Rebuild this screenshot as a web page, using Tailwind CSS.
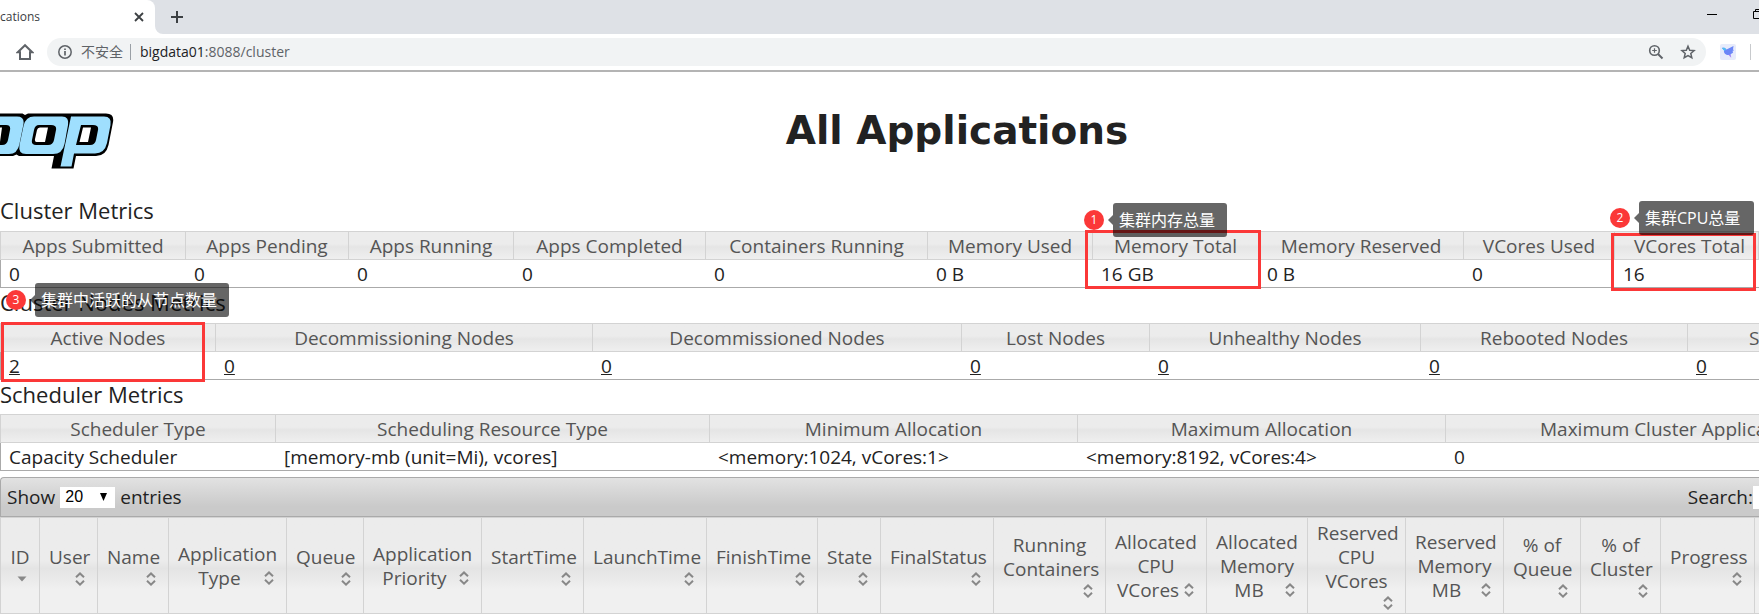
<!DOCTYPE html>
<html lang="en">
<head>
<meta charset="utf-8">
<title>All Applications</title>
<script src="https://cdn.jsdelivr.net/npm/@tailwindcss/browser@4"></script>
</head>
<body class="relative min-h-screen overflow-hidden bg-white font-['Open_Sans','Noto_Sans_CJK_SC',sans-serif] text-[19px] leading-6 text-[#222]">

<!-- shared symbols -->
<svg class="hidden">
  <symbol id="sort" viewBox="0 0 16 16"><path d="M4 6.2 8 2.4l4 3.8M4 9.8l4 3.8 4-3.8" fill="none" stroke="#888" stroke-width="2"/></symbol>
  <symbol id="desc" viewBox="0 0 16 16"><path d="M3.500 5.500h9L8 10.500z" fill="#888"/></symbol>
</svg>

<!-- tab strip -->
<div class="flex h-[34px] items-stretch bg-[#dee1e6]">
  <div class="flex w-[155px] flex-none items-center justify-between rounded-tr-lg bg-white pr-[10px]">
    <span class="text-[12px] text-[#3c4043]">cations</span>
    <button aria-label="Close tab" class="flex size-3 items-center justify-center"><svg class="size-3" viewBox="0 0 12 12"><path d="M2 2l8 8M10 2l-8 8" stroke="#3c4043" stroke-width="1.8"/></svg></button>
  </div>
  <svg class="size-2 flex-none self-end" viewBox="0 0 8 8"><path d="M0 0a8 8 0 0 0 8 8H0z" fill="#fff"/></svg>
  <button aria-label="New tab" class="ml-2 flex items-center"><svg class="size-3" viewBox="0 0 12 12"><path d="M6 0v12M0 6h12" stroke="#3c4043" stroke-width="2"/></svg></button>
  <div class="ml-auto flex gap-9 pt-[9px]">
    <button aria-label="Minimize" class="h-[10px]"><svg class="h-[10px] w-[10px]" viewBox="0 0 10 10"><path d="M0 5.500h10" stroke="#000"/></svg></button>
    <button aria-label="Restore" class="h-[10px] w-[6px] overflow-hidden"><svg class="h-[10px] w-[10px]" viewBox="0 0 10 10"><path d="M.5 2.500h7v7h-7zM2.500 2.500v-2h7v7h-2" fill="none" stroke="#000"/></svg></button>
  </div>
</div>

<!-- address bar -->
<div class="flex h-[38px] items-center border-b-2 border-[#b4b4b4] pr-2">
  <button aria-label="Home" class="ml-4 flex-none"><svg class="size-[18px]" viewBox="0 0 18 18"><path d="M9 2.200 1.800 9.200H4V16h10V9.200h2.200z" fill="none" stroke="#5f6368" stroke-width="2"/></svg></button>
  <div class="ml-[13px] flex h-7 flex-1 items-center rounded-full bg-[#f1f3f4] pr-[10px] pl-[11px] text-[14px] text-[#5f6368]">
    <svg class="size-[14px]" viewBox="0 0 14 14"><circle cx="7" cy="7" r="6.200" fill="none" stroke="#5f6368" stroke-width="1.500"/><path d="M7 6v4.500M7 3.400V5" stroke="#5f6368" stroke-width="1.700"/></svg>
    <span class="ml-[9px]">不安全</span>
    <span class="ml-[7px] h-4 w-px bg-[#9aa0a6]"></span>
    <span class="ml-[9px]"><span class="text-[#202124]">bigdata01</span>:8088/cluster</span>
    <button aria-label="Zoom" class="ml-auto"><svg class="size-4" viewBox="0 0 16 16"><g fill="none" stroke="#5f6368"><circle cx="6.500" cy="6.500" r="4.800" stroke-width="1.600"/><path d="M10 10l4.500 4.500" stroke-width="2"/><path d="M6.500 4.200v4.600M4.200 6.500h4.600" stroke-width="1.200"/></g></svg></button>
    <button aria-label="Bookmark" class="ml-4"><svg class="size-4" viewBox="0 0 16 16"><path d="M8 2.200l1.700 4 4.400.4-3.300 2.900 1 4.200L8 11.500l-3.800 2.200 1-4.200-3.300-2.900 4.400-.4z" fill="none" stroke="#5f6368" stroke-width="1.500"/></svg></button>
  </div>
  <button aria-label="Extension" class="ml-[14px] flex-none"><svg class="size-4" viewBox="0 0 16 16"><rect width="16" height="16" rx="2" fill="#e7ebfb"/><path d="M2 4c2-.6 3.500 0 4.500 1.500L13.500 2 13 5.500l1.200.8-1.600.5.4 2-2.500 1.400.8 3.300-2.600-2.400C5.500 11 3.500 9 4 6.500z" fill="#6b86f7"/><path d="M2 4c2-.6 3.500 0 4 1.500L4.500 7z" fill="#4ec0f5"/><path d="M8.500 10.500l2 .5.500 2.800z" fill="#c48af5"/></svg></button>
  <span class="ml-[14px] h-4 w-px flex-none bg-[#c8cacd]"></span>
</div>

<!-- page banner -->
<header class="flex pt-[34px]">
  <svg class="mt-1 h-[64px] w-[155px] flex-none" viewBox="0 110 155 64">
    <path d="M-4 113.500H22.500L25 115 28 113.500H106Q114.500 113.500 113 122L108.500 145Q106 156 96 156H76L73.500 168.500H51.500L54 156H19L16.500 154.500 13 156H-4Z" fill="#000"/>
    <path d="M-4 116.500H17Q24.500 116.500 23.500 124L19.500 144Q17.500 154 9 154H-4Z" fill="#9fdffe"/>
    <path d="M34 116.500H62Q69.500 116.500 68 125L64.500 144Q62.500 154 53 154H26Q18 154 19.500 145L23.500 126Q25.500 116.500 34 116.500Z" fill="#9fdffe"/>
    <path d="M71 116.500H104Q112 116.500 110.500 125L107 143Q104.500 153.500 95 153.500H74L71.500 166.500H60.500Z" fill="#9fdffe"/>
    <path d="M-4 125H6Q11 125 10 130L8 140Q7 145 2 145H-4ZM39 125H51Q57 125 56 130L54 140Q53 145 48 145H36Q31 145 32 140L34 130Q35 125 39 125ZM81 125H93Q99 125 98 130L96 140Q95 145 90 145H76Z" fill="#000"/>
    <path d="M-4 127.500H2L0 142H-4ZM40 127.500H48L45 142H36.500Q34.500 142 35 139L37 130Q37.500 127.500 40 127.500ZM83 127.500H91L88 142H79.500Z" fill="#fff"/>
  </svg>
  <h1 class="flex-1 text-center font-['DejaVu_Sans',sans-serif] text-[39px] leading-[50px] font-bold">All Applications</h1>
</header>

<main class="mt-[22px]">
  <h2 class="mb-[6px] text-[22px] leading-[29px]">Cluster Metrics</h2>
  <table class="w-full table-fixed border-separate border-spacing-0 border-b border-[#aaa]">
    <colgroup><col class="w-[186px]"><col class="w-[163px]"><col class="w-[165px]"><col class="w-[192px]"><col class="w-[222px]"><col class="w-[165px]"><col class="w-[166px]"><col class="w-[205px]"><col class="w-[151px]"><col></colgroup>
    <thead>
      <tr class="h-[29px] bg-linear-to-b from-[#ececec] from-45% via-[#e5e5e5] via-55% to-[#f0f0f0] whitespace-nowrap text-[#555] *:border-y *:border-r *:border-[#d3d3d3] *:p-0 *:text-center *:font-normal">
        <th class="border-l">Apps Submitted</th><th>Apps Pending</th><th>Apps Running</th><th>Apps Completed</th><th>Containers Running</th><th>Memory Used</th><th>Memory Total</th><th>Memory Reserved</th><th>VCores Used</th><th><span class="block pl-[6px]">VCores Total</span></th>
      </tr>
    </thead>
    <tbody>
      <tr class="h-[27px] *:px-2 *:py-0">
        <td class="border-l border-[#aaa]">0</td><td>0</td><td>0</td><td>0</td><td>0</td><td>0 B</td><td>16 GB</td><td>0 B</td><td>0</td><td>16</td>
      </tr>
    </tbody>
  </table>

  <h2 class="mb-[6px] text-[22px] leading-[29px]">Cluster Nodes Metrics</h2>
  <table class="w-full table-fixed border-separate border-spacing-0 border-b border-[#aaa]">
    <colgroup><col class="w-[216px]"><col class="w-[377px]"><col class="w-[369px]"><col class="w-[188px]"><col class="w-[271px]"><col class="w-[267px]"><col></colgroup>
    <thead>
      <tr class="h-[29px] bg-linear-to-b from-[#ececec] from-45% via-[#e5e5e5] via-55% to-[#f0f0f0] whitespace-nowrap text-[#555] *:border-y *:border-r *:border-[#d3d3d3] *:p-0 *:text-center *:font-normal">
        <th class="border-l">Active Nodes</th><th>Decommissioning Nodes</th><th>Decommissioned Nodes</th><th>Lost Nodes</th><th>Unhealthy Nodes</th><th>Rebooted Nodes</th><th class="border-r-0!"><span class="block overflow-hidden pl-[61px] text-left">Shutdown Nodes</span></th>
      </tr>
    </thead>
    <tbody>
      <tr class="h-[27px] *:px-2 *:py-0">
        <td class="border-l border-[#aaa]"><a href="#active" class="underline">2</a></td><td><a href="#decommissioning" class="underline">0</a></td><td><a href="#decommissioned" class="underline">0</a></td><td><a href="#lost" class="underline">0</a></td><td><a href="#unhealthy" class="underline">0</a></td><td><a href="#rebooted" class="underline">0</a></td><td><a href="#shutdown" class="underline">0</a></td>
      </tr>
    </tbody>
  </table>

  <h2 class="mb-[5px] text-[22px] leading-[29px]">Scheduler Metrics</h2>
  <table class="w-full table-fixed border-separate border-spacing-0 border-b border-[#aaa]">
    <colgroup><col class="w-[276px]"><col class="w-[434px]"><col class="w-[368px]"><col class="w-[368px]"><col></colgroup>
    <thead>
      <tr class="h-[29px] bg-linear-to-b from-[#ececec] from-45% via-[#e5e5e5] via-55% to-[#f0f0f0] whitespace-nowrap text-[#555] *:border-y *:border-r *:border-[#d3d3d3] *:p-0 *:text-center *:font-normal">
        <th class="border-l">Scheduler Type</th><th>Scheduling Resource Type</th><th>Minimum Allocation</th><th>Maximum Allocation</th><th class="border-r-0!"><span class="block overflow-hidden pl-[94px] text-left">Maximum Cluster Application Priority</span></th>
      </tr>
    </thead>
    <tbody>
      <tr class="h-[27px] *:px-2 *:py-0">
        <td class="border-l border-[#aaa]">Capacity Scheduler</td><td>[memory-mb (unit=Mi), vcores]</td><td>&lt;memory:1024, vCores:1&gt;</td><td>&lt;memory:8192, vCores:4&gt;</td><td>0</td>
      </tr>
    </tbody>
  </table>

  <!-- applications table toolbar -->
  <div class="mt-[6px] flex h-10 items-center rounded-tl border border-r-0 border-[#aaa] bg-linear-to-b from-[#e2e2e2] to-[#cacaca] to-75% pl-[6px]">
    <label for="length">Show</label>
    <span class="relative mx-[5px] flex">
      <select id="length" class="h-[21px] w-[55px] appearance-none bg-white pl-[5px] font-['Liberation_Sans',sans-serif] text-[16px] leading-5 text-black"><option>20</option><option>50</option><option>100</option></select>
      <svg class="pointer-events-none absolute top-[6px] right-2 h-2 w-[7px]" viewBox="0 0 7 8"><path d="M0 0h7L3.500 8z" fill="#000"/></svg>
    </span>
    <span>entries</span>
    <label for="search" class="ml-auto">Search:</label>
    <input id="search" type="text" class="h-[23px] w-[6px] bg-white">
  </div>

  <!-- applications table -->
  <table class="w-full table-fixed border-separate border-spacing-0">
    <colgroup><col class="w-[40px]"><col class="w-[58px]"><col class="w-[71px]"><col class="w-[118px]"><col class="w-[77px]"><col class="w-[118px]"><col class="w-[102px]"><col class="w-[123px]"><col class="w-[111px]"><col class="w-[63px]"><col class="w-[113px]"><col class="w-[112px]"><col class="w-[101px]"><col class="w-[101px]"><col class="w-[98px]"><col class="w-[98px]"><col class="w-[77px]"><col class="w-[80px]"><col class="w-[94px]"><col></colgroup>
    <thead>
      <tr class="h-[97px] bg-linear-to-b from-[#ececec] from-45% via-[#e4e4e4] via-53% to-[#f0f0f0] to-75% whitespace-nowrap text-[#555] *:border-y *:border-r *:border-[#d3d3d3] *:px-[9px] *:py-0 *:text-center *:font-normal">
        <th class="border-l">ID<svg class="mt-[2px] ml-auto block size-4"><use href="#desc"/></svg></th>
        <th>User<svg class="mt-[2px] ml-auto block size-4"><use href="#sort"/></svg></th>
        <th>Name<svg class="mt-[2px] ml-auto block size-4"><use href="#sort"/></svg></th>
        <th>Application<span class="flex items-center"><span class="flex-1">Type</span><svg class="size-4"><use href="#sort"/></svg></span></th>
        <th>Queue<svg class="mt-[2px] ml-auto block size-4"><use href="#sort"/></svg></th>
        <th>Application<span class="flex items-center"><span class="flex-1">Priority</span><svg class="size-4"><use href="#sort"/></svg></span></th>
        <th>StartTime<svg class="mt-[2px] ml-auto block size-4"><use href="#sort"/></svg></th>
        <th>LaunchTime<svg class="mt-[2px] ml-auto block size-4"><use href="#sort"/></svg></th>
        <th>FinishTime<svg class="mt-[2px] ml-auto block size-4"><use href="#sort"/></svg></th>
        <th>State<svg class="mt-[2px] ml-auto block size-4"><use href="#sort"/></svg></th>
        <th>FinalStatus<svg class="mt-[2px] ml-auto block size-4"><use href="#sort"/></svg></th>
        <th>Running<br>Containers<svg class="mt-[2px] ml-auto block size-4"><use href="#sort"/></svg></th>
        <th>Allocated<br>CPU<span class="flex items-center"><span class="flex-1">VCores</span><svg class="size-4"><use href="#sort"/></svg></span></th>
        <th>Allocated<br>Memory<span class="flex items-center"><span class="flex-1">MB</span><svg class="size-4"><use href="#sort"/></svg></span></th>
        <th>Reserved<br>CPU<br>VCores<svg class="mt-[2px] ml-auto block size-4"><use href="#sort"/></svg></th>
        <th>Reserved<br>Memory<span class="flex items-center"><span class="flex-1">MB</span><svg class="size-4"><use href="#sort"/></svg></span></th>
        <th>% of<br>Queue<svg class="mt-[2px] ml-auto block size-4"><use href="#sort"/></svg></th>
        <th>% of<br>Cluster<svg class="mt-[2px] ml-auto block size-4"><use href="#sort"/></svg></th>
        <th>Progress<svg class="mt-[2px] ml-auto block size-4"><use href="#sort"/></svg></th>
        <th class="border-r-0!"></th>
      </tr>
    </thead>
  </table>
</main>

<!-- annotations laid over the page -->
<div class="absolute top-[230px] left-[1085px] h-[59px] w-[176px] border-3 border-[#fb3838]"></div>
<div class="absolute top-[233px] left-[1611px] h-[58px] w-[145px] border-3 border-[#fb3838]"></div>
<div class="absolute top-[322px] left-[1px] h-[60px] w-[204px] border-3 border-[#fb3838]"></div>

<div class="absolute top-[203px] left-[1084px] flex items-center text-white">
  <span class="flex size-5 items-center justify-center rounded-full bg-[#fb3838] text-[12px] leading-5">1</span>
  <svg class="ml-1 h-[10px] w-[5px]" viewBox="0 0 5 10"><path d="M5 0v10L0 5z" fill="#000" fill-opacity=".6"/></svg>
  <span class="h-[34px] w-[114px] rounded-[3px] bg-black/60 pl-[6px] text-[16px] leading-[34px] whitespace-nowrap">集群内存总量</span>
</div>
<div class="absolute top-[201px] left-[1610px] flex items-center text-white">
  <span class="flex size-5 items-center justify-center rounded-full bg-[#fb3838] text-[12px] leading-5">2</span>
  <svg class="ml-1 h-[10px] w-[5px]" viewBox="0 0 5 10"><path d="M5 0v10L0 5z" fill="#000" fill-opacity=".6"/></svg>
  <span class="h-[34px] w-[115px] rounded-[3px] bg-black/60 pl-[6px] text-[16px] leading-[34px] whitespace-nowrap">集群CPU总量</span>
</div>
<div class="absolute top-[283px] left-[6px] flex items-center text-white">
  <span class="flex size-5 items-center justify-center rounded-full bg-[#fb3838] text-[12px] leading-5">3</span>
  <svg class="ml-1 h-[10px] w-[5px]" viewBox="0 0 5 10"><path d="M5 0v10L0 5z" fill="#000" fill-opacity=".6"/></svg>
  <span class="h-[34px] w-[194px] rounded-[3px] bg-black/60 pl-[6px] text-[16px] leading-[34px] whitespace-nowrap">集群中活跃的从节点数量</span>
</div>
</body>
</html>
